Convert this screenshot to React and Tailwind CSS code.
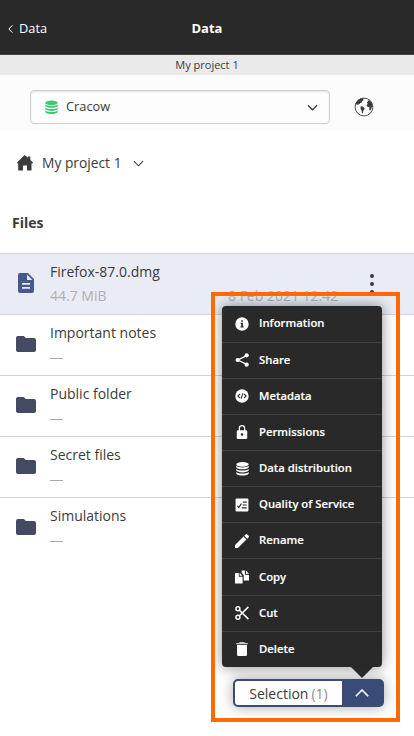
import React from "react";

function Svg({ children, className, box = "0 0 24 24" }) {
  return (
    <svg viewBox={box} className={className} fill="currentColor">
      {children}
    </svg>
  );
}

function Chevron({ className, d = "M1 1 L6 6 L11 1", box = "0 0 12 7", w = 1.5 }) {
  return (
    <svg viewBox={box} className={className} fill="none" stroke="currentColor" strokeWidth={w}>
      <path d={d} />
    </svg>
  );
}

function Database({ className }) {
  return (
    <Svg className={className} box="0 0 14 15">
      <ellipse cx="7" cy="2.5" rx="6.7" ry="2.5" />
      <path d="M.3 4.1C2.6 6.3 11.4 6.3 13.7 4.1V5.9C12.5 8.5 1.5 8.5.3 5.9z" />
      <path d="M.3 7.4C2.6 9.6 11.4 9.6 13.7 7.4V9.2C12.5 11.8 1.5 11.8.3 9.2z" />
      <path d="M.3 10.7C2.6 12.9 11.4 12.9 13.7 10.7V12.3C12.5 15.2 1.5 15.2.3 12.3z" />
    </Svg>
  );
}

function Globe({ className }) {
  return (
    <Svg className={className} box="0 0 20 20">
      <circle cx="10" cy="10" r="8.9" fill="none" stroke="currentColor" strokeWidth="0.9" />
      <path d="M1.5 7.2C2.4 4 5 1.6 8.5 1L10 1.8 9 2.5 9.500 3.500 8 4.300 7.600 5.700 6.200 6 5.600 7.100 4.600 6.900 4.400 8 3 7.500z" />
      <path d="M6.600 9.600L8.200 9.300 10.600 11 10.300 12.600 9.300 13.700 8.800 16 8 16.500 7.600 13.600 6.600 12z" />
      <path d="M12.700 5.400L13.900 4.600 14 3.400 15.600 3.400 17.700 5.900 18.700 9.300 17.700 9.900 17.100 12.300 16 14 15.300 12.500 15.300 10.300 13 9.600 12.600 8 13.800 6.800z" />
    </Svg>
  );
}

function Folder() {
  return (
    <Svg className="-mt-[3px] h-4 w-5 text-[#444a62]" box="0 0 20 16">
      <path d="M2 0h5.8l2 2H18a2 2 0 0 1 2 2v10a2 2 0 0 1-2 2H2a2 2 0 0 1-2-2V2a2 2 0 0 1 2-2z" />
    </Svg>
  );
}

function Document() {
  return (
    <Svg className="-mt-[3px] h-5 w-4 text-[#475a8b]" box="0 0 16 20">
      <path
        fillRule="evenodd"
        d="M2 0h8l6 6v12a2 2 0 0 1-2 2H2a2 2 0 0 1-2-2V2a2 2 0 0 1 2-2zM9 1.6V7h5.4zM4 10v1.7h8V10zM4 14v1.7h8V14z"
      />
    </Svg>
  );
}

const icons = {
  info: (
    <path
      fillRule="evenodd"
      d="M12 .5a11.500 11.500 0 1 0 0 23 11.500 11.500 0 0 0 0-23zM10.700 5.500h2.800v2.800h-2.800zM9.600 10h4v6h1.200v2H9.400v-2h1.200v-4h-1z"
    />
  ),
  share: (
    <>
      <path d="M20 4.500L5 12l15 7.500" fill="none" stroke="currentColor" strokeWidth="2.2" />
      <circle cx="20" cy="4" r="3.6" />
      <circle cx="4.500" cy="12" r="3.6" />
      <circle cx="20" cy="20" r="3.6" />
    </>
  ),
  metadata: (
    <>
      <circle cx="12" cy="12" r="11.500" />
      <path d="M8.600 8.400L4.800 12l3.800 3.600M15.400 8.400l3.800 3.600-3.800 3.600M13.500 7.600l-3 8.800" fill="none" stroke="#292929" strokeWidth="1.8" />
    </>
  ),
  lock: (
    <path
      fillRule="evenodd"
      d="M12 0a5.600 5.600 0 0 0-5.600 5.600V9H5a2 2 0 0 0-2 2v11a2 2 0 0 0 2 2h14a2 2 0 0 0 2-2V11a2 2 0 0 0-2-2h-1.400V5.600A5.600 5.600 0 0 0 12 0zM8.500 9V5.600a3.500 3.500 0 0 1 7 0V9zM12 14.200a2.200 2.200 0 1 1 0 4.400 2.200 2.200 0 0 1 0-4.400z"
    />
  ),
  quality: (
    <>
      <rect x="1" y="1" width="22" height="22" rx="1.500" />
      <path d="M4 13.500l2.700 3L11 9.500M13.500 7H20M13 12h7M11.500 17H20" fill="none" stroke="#292929" strokeWidth="2" />
    </>
  ),
  pencil: (
    <path d="M0 19L14.600 4.400l5 5L5 24H0zM16 3L18.200.8a2 2 0 0 1 2.800 0L23.200 3a2 2 0 0 1 0 2.800L21 8z" />
  ),
  copy: (
    <>
      <path d="M0 5h6.500v6.500H13V23H0z" />
      <path d="M8 4.500L12.600 9.800H8z" />
      <path d="M11.500 1H17v7h7v10h-9V9l-3.500-4.500z" />
      <path d="M18.800 1L24 6.300h-5.200z" />
    </>
  ),
  cut: (
    <g fill="none" stroke="currentColor" strokeWidth="2.500">
      <circle cx="5" cy="4.800" r="3.400" />
      <circle cx="5" cy="19.200" r="3.400" />
      <path d="M7.600 7.200L23 22.500M7.600 16.800L23 1.500" />
    </g>
  ),
  trash: (
    <>
      <path d="M8 0h8l1 1.500h5V4H2V1.500h5z" opacity="0.75" />
      <path d="M3.500 5.300h17V22a2 2 0 0 1-2 2h-13a2 2 0 0 1-2-2z" />
    </>
  ),
};

const menu = [
  ["info", "Information"],
  ["share", "Share"],
  ["metadata", "Metadata"],
  ["lock", "Permissions"],
  ["database", "Data distribution"],
  ["quality", "Quality of Service"],
  ["pencil", "Rename"],
  ["copy", "Copy"],
  ["cut", "Cut"],
  ["trash", "Delete"],
];

const folders = ["Important notes", "Public folder", "Secret files", "Simulations"];

function Header() {
  return (
    <header className="grid h-[55px] grid-cols-3 items-center border-b border-[#444] bg-[#292929] pt-[3px] text-[13px] text-white">
      <div className="flex items-center gap-[6px] pl-2">
        <Chevron className="h-2 w-[5px]" box="0 0 5 8" d="M4.4 .3L.9 4l3.5 3.7" w={1} />
        <span className="text-[12.8px]">Data</span>
      </div>
      <div className="text-center font-bold">Data</div>
    </header>
  );
}

function SpaceBar() {
  return (
    <div className="flex h-[55px] items-start bg-[#fcfcfc] pl-[30px] pt-[15px]">
      <div className="flex h-[34px] w-[300px] items-center rounded border border-[#cfcfcf] bg-[#fdfdfd] pl-3.5 pr-[11px] shadow-[inset_0_1px_2px_rgba(0,0,0,0.12)]">
        <Database className="h-[15px] w-[13px] text-[#3dc878]" />
        <span className="ml-2 flex-1 text-[12.8px]">Cracow</span>
        <Chevron className="mt-px h-[7px] w-[11px]" w={1.4} />
      </div>
      <Globe className="ml-6 mt-[7px] h-5 w-5" />
    </div>
  );
}

function Row({ icon, name, detail, date, selected }) {
  return (
    <div className={selected ? "flex h-[61px] border-t border-[#d2d2d2] bg-[#e9ecf4]" : "flex h-[61px] border-t border-[#d2d2d2]"}>
      <div className="flex w-[50px] shrink-0 items-center pl-4">
        <div className="flex w-5 justify-center">{icon}</div>
      </div>
      <div className="min-w-0 flex-1 pt-1.5 text-sm">
        <div className="leading-6">{name}</div>
        <div className="flex h-6 items-center text-[#b0b0b0]">
          {detail ? (
            <span className="w-[178px] shrink-0">{detail}</span>
          ) : (
            <span className="mt-0.5 h-px w-[13px] bg-[#aaaaaa]" />
          )}
          {date && <span className="shrink-0 whitespace-nowrap">{date}</span>}
        </div>
      </div>
      {selected && (
        <div className="flex w-[84px] shrink-0 flex-col items-center gap-1 pt-5">
          <span className="h-1 w-1 rounded-full bg-[#3b3b3b]" />
          <span className="h-1 w-1 rounded-full bg-[#3b3b3b]" />
          <span className="h-1 w-1 rounded-full bg-[#3b3b3b]" />
        </div>
      )}
    </div>
  );
}

function SelectionMenu() {
  return (
    <div className="w-40 rounded bg-[#292929] text-white shadow-[0_0_14px_rgba(0,0,0,0.45)]">
      {menu.map(([icon, label], i) => (
        <div
          key={label}
          className={
            i
              ? "flex h-[36.15px] items-center gap-[10px] border-t border-[#414141] pl-[13px]"
              : "flex h-[35.65px] items-center gap-[10px] pl-[13px]"
          }
        >
          {icon === "database" ? (
            <div className="flex w-3.5 justify-center"><Database className="h-3.5 w-[13px]" /></div>
          ) : (
            <Svg className="h-3.5 w-3.5">{icons[icon]}</Svg>
          )}
          <span className="text-[11.3px] font-semibold [-webkit-text-stroke:0.15px_white]">{label}</span>
        </div>
      ))}
    </div>
  );
}

export default function App() {
  return (
    <div className="relative h-[736px] w-[414px] overflow-hidden bg-white font-['Open_Sans',sans-serif] text-[#3b3b3b]">
      <Header />
      <div className="flex h-5 items-center justify-center bg-[#eaeaea] text-[11px]">My project 1</div>
      <SpaceBar />
      <div className="flex h-[66px] items-center pl-[17px]">
        <Svg className="h-4 w-4" box="0 0 16 16">
          <path d="M7.6 0L11 2.8V1.5h2.3v3.4L16 7.4 15.3 8.6H14.5V15.5H10V10.5H6v5H1.2V8.6H.5L0 7.4z" />
        </Svg>
        <span className="ml-[9px] text-[13.8px]">My project 1</span>
        <Chevron className="ml-[11px] mt-px h-[7px] w-[11px]" w={1.2} />
      </div>
      <div className="h-[57px] pl-3 pt-[17px] text-sm font-bold">Files</div>
      <main>
        <Row selected icon={<Document />} name="Firefox-87.0.dmg" detail="44.7 MiB" date="8 Feb 2021 12:42" />
        {folders.map((name) => (
          <Row key={name} icon={<Folder />} name={name} />
        ))}
      </main>
      <div className="absolute left-[211px] top-[292px] h-[430px] w-[189px] overflow-hidden border-4 border-[#ff6a00] pl-[7px] pt-[10px]">
        <SelectionMenu />
        <svg className="ml-[129px] h-3 w-[22px]" viewBox="0 0 22 12" fill="#292929">
          <path d="M0 0h22L11 11z" />
        </svg>
        <div className="ml-[11px] flex h-7 w-[151px] overflow-hidden rounded-[5px] border-2 border-[#3a4b78] bg-[#3a4b78] shadow-[0_0_14px_rgba(0,0,0,0.35)]">
          <div className="flex w-[107px] items-center justify-center gap-[3px] bg-white pt-px text-[14px]">
            Selection <span className="text-[#8c8c8c]">(1)</span>
          </div>
          <div className="flex flex-1 items-center justify-center text-white">
            <Chevron className="h-2 w-3.5" d="M.8 7.2L7 1l6.2 6.2" box="0 0 14 8" w={1.6} />
          </div>
        </div>
      </div>
    </div>
  );
}
